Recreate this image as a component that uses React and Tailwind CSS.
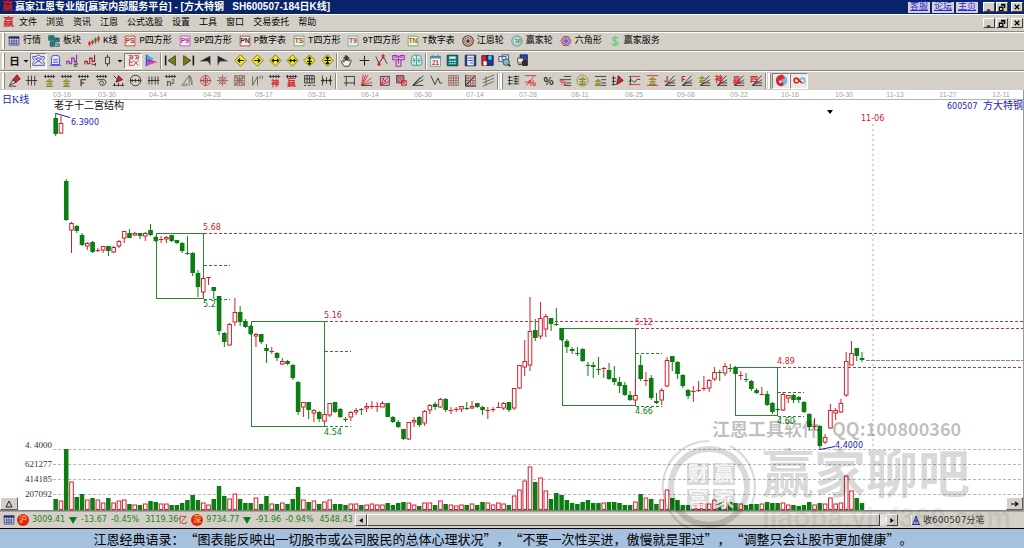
import clsx from 'clsx';

const MENU = ['文件', '浏览', '资讯', '江恩', '公式选股', '设置', '工具', '窗口', '交易委托', '帮助'];

// Trading-day axis, so the labels are not evenly spaced
const DATES = [
  ['03-16', 62], ['03-30', 107], ['04-14', 158], ['04-28', 212], ['05-17', 264], ['05-31', 317], ['06-14', 370],
  ['06-30', 423], ['07-14', 475], ['07-28', 528], ['08-11', 580], ['08-25', 634], ['09-08', 686], ['09-22', 739],
  ['10-16', 790], ['10-30', 844], ['11-13', 895], ['11-27', 948], ['12-11', 1001],
];

// [up, high, body top, body bottom, low, volume] in chart units
const CANDLES = [
  [0, 113, 118, 134, 136, 11], [1, 116, 123, 133, 134, 9], [0, 179, 181, 220, 221, 61], [1, 222, 223, 230, 253, 28],
  [0, 225, 226, 231, 233, 13], [0, 233, 235, 245, 246, 16], [1, 242, 243, 246, 250, 10], [0, 241, 242, 252, 253, 12],
  [1, 248, 250, 251, 252, 10], [1, 246, 246, 250, 253, 7], [0, 246, 246, 251, 256, 12], [1, 246, 247, 252, 253, 7],
  [1, 240, 241, 246, 248, 9], [1, 231, 231, 238, 243, 10], [0, 229, 233, 238, 238, 6], [1, 232, 233, 235, 236, 5],
  [0, 233, 233, 236, 239, 5], [1, 232, 233, 236, 241, 6], [0, 224, 230, 235, 236, 9], [0, 236, 237, 241, 242, 8],
  [1, 236, 239, 240, 243, 6], [1, 236, 237, 239, 243, 6], [0, 235, 235, 241, 242, 5], [0, 240, 240, 243, 244, 5],
  [0, 242, 243, 251, 253, 7], [0, 236, 253, 254, 255, 10], [0, 252, 253, 273, 276, 15], [0, 270, 273, 287, 297, 10],
  [1, 277, 278, 292, 297, 7], [1, 277, 277, 278, 285, 5], [0, 287, 287, 291, 299, 11], [0, 296, 296, 331, 335, 24],
  [0, 332, 333, 342, 347, 14], [1, 323, 324, 345, 346, 11], [1, 298, 312, 322, 326, 16], [0, 306, 312, 322, 326, 11],
  [0, 319, 321, 327, 328, 7], [0, 325, 326, 334, 335, 7], [1, 333, 334, 336, 347, 12], [0, 334, 334, 342, 344, 6],
  [0, 344, 348, 351, 363, 14], [1, 347, 351, 352, 354, 6], [0, 352, 353, 358, 361, 6], [1, 358, 361, 364, 365, 7],
  [0, 360, 361, 364, 365, 6], [0, 364, 365, 378, 380, 11], [0, 381, 382, 412, 415, 23], [1, 402, 402, 407, 417, 10],
  [0, 402, 402, 410, 419, 8], [1, 409, 410, 413, 422, 9], [0, 411, 412, 419, 422, 6], [1, 414, 414, 421, 424, 8],
  [1, 403, 403, 415, 417, 10], [0, 402, 402, 412, 413, 6], [0, 408, 409, 417, 418, 6], [0, 417, 419, 420, 422, 5],
  [1, 411, 412, 417, 421, 6], [1, 408, 410, 412, 415, 6], [0, 408, 409, 410, 415, 5], [1, 403, 406, 408, 412, 5],
  [1, 401, 406, 407, 409, 6], [1, 402, 406, 407, 412, 5], [1, 401, 403, 407, 407, 5], [0, 403, 403, 417, 417, 7],
  [0, 416, 417, 422, 423, 5], [0, 420, 422, 427, 428, 7], [0, 429, 429, 439, 440, 8], [1, 422, 422, 439, 440, 7],
  [1, 417, 420, 422, 427, 5], [0, 416, 417, 425, 427, 4], [1, 410, 411, 423, 426, 7], [1, 404, 405, 410, 414, 7],
  [0, 402, 404, 407, 410, 5], [1, 398, 399, 407, 408, 9], [0, 398, 399, 410, 412, 6], [1, 407, 410, 411, 414, 5],
  [1, 407, 409, 410, 412, 4], [1, 406, 406, 409, 412, 5], [0, 402, 408, 409, 410, 5], [1, 401, 406, 408, 409, 6],
  [0, 403, 403, 407, 408, 5], [0, 406, 407, 410, 415, 8], [1, 407, 410, 411, 419, 7], [1, 407, 409, 410, 412, 5],
  [1, 402, 407, 408, 408, 7], [1, 402, 403, 408, 410, 6], [0, 402, 402, 410, 412, 5], [1, 388, 388, 408, 410, 14],
  [1, 365, 365, 388, 389, 20], [1, 340, 361, 367, 376, 29], [1, 297, 331, 365, 371, 43], [0, 319, 330, 338, 341, 28],
  [1, 302, 318, 336, 339, 32], [1, 314, 316, 329, 337, 19], [0, 318, 318, 324, 331, 11], [0, 308, 324, 325, 326, 17],
  [0, 328, 328, 340, 341, 15], [0, 339, 341, 347, 353, 10], [0, 347, 349, 351, 354, 7], [0, 347, 353, 354, 356, 6],
  [0, 348, 349, 361, 362, 8], [0, 362, 365, 366, 376, 10], [0, 362, 365, 367, 378, 7], [0, 357, 369, 370, 375, 7],
  [1, 367, 368, 369, 378, 7], [0, 363, 370, 379, 380, 8], [0, 366, 378, 382, 385, 8], [0, 377, 382, 386, 393, 7],
  [0, 382, 385, 395, 396, 5], [0, 391, 395, 400, 401, 5], [1, 378, 395, 400, 405, 8], [0, 355, 365, 379, 381, 16],
  [1, 372, 380, 381, 386, 12], [0, 375, 378, 398, 400, 11], [0, 393, 401, 403, 404, 6], [1, 388, 390, 400, 405, 10],
  [1, 357, 360, 386, 387, 20], [0, 356, 356, 362, 371, 12], [0, 361, 362, 374, 379, 10], [0, 374, 375, 386, 388, 5],
  [0, 389, 390, 396, 399, 5], [1, 386, 391, 392, 402, 5], [1, 381, 390, 391, 392, 6], [1, 376, 388, 389, 391, 6],
  [1, 379, 380, 388, 392, 6], [1, 367, 372, 379, 381, 10], [0, 370, 372, 373, 381, 8], [1, 363, 366, 373, 376, 10],
  [0, 364, 368, 369, 372, 8], [0, 366, 367, 374, 375, 7], [1, 371, 375, 376, 380, 6], [0, 373, 379, 380, 382, 5],
  [0, 380, 381, 389, 391, 6], [0, 388, 390, 393, 394, 6], [1, 387, 394, 395, 395, 6], [0, 391, 394, 405, 406, 8],
  [0, 402, 403, 412, 414, 7], [0, 408, 409, 410, 411, 7], [1, 392, 394, 410, 411, 7], [1, 395, 395, 398, 403, 5],
  [0, 394, 395, 400, 403, 5], [0, 396, 397, 400, 403, 4], [0, 401, 402, 412, 413, 5], [0, 413, 414, 427, 430, 8],
  [1, 418, 426, 427, 430, 5], [0, 425, 426, 446, 450, 7], [1, 434, 437, 442, 444, 6], [1, 404, 410, 428, 429, 12],
  [1, 408, 410, 413, 420, 6], [1, 399, 403, 412, 413, 7], [1, 352, 361, 395, 397, 34], [1, 341, 353, 365, 365, 19],
  [0, 348, 348, 356, 361, 12], [0, 352, 358, 360, 362, 7],
];

const BOXES = [
  { x: 156, y: 233, w: 48, h: 65, hi: '5.68', lo: '5.2', mid: 265, base: 299 },
  { x: 251, y: 321, w: 74, h: 105, hi: '5.16', lo: '4.54', mid: 351, base: 426 },
  { x: 562, y: 328, w: 74, h: 77, hi: '5.12', lo: '4.66', mid: 353, base: 406 },
  { x: 735, y: 367, w: 43, h: 48, hi: '4.89', lo: '4.60', mid: 392, base: 416 },
];

const GREEN = '#0b7d12';
const RED = '#d3202f';

const K = '#222';
const R = '#d8202a';
const O = '#8f8a1e';
const CJK = '"Noto Sans CJK SC", sans-serif';

const glyph = (text, color, x = 8, y = 14, size = 10) => (
  <text x={x} y={y} fontSize={size} fontWeight="bold" fill={color} stroke="none" textAnchor="middle" fontFamily={CJK}>
    {text}
  </text>
);
const comb = <path d="M1 3h14M3 1v4M6.500 1v4M10 1v4M13 1v4" stroke={K} />;
const fan = <path d="M3 14h12M3 14L14 2M3 14L15 7M6 11h9" stroke={K} />;
const letterBox = (text, frame, color) => (
  <>
    <path d="M1.500 1.500h13v13h-13z" stroke={frame} fill="#f2efe8" />
    <text x="8" y="11" fontSize="9" fontWeight="bold" fill={color} stroke="none" textAnchor="middle" fontFamily="Liberation Sans, sans-serif">
      {text}
    </text>
  </>
);
const diamond = (arrow) => (
  <>
    <path d="M8 1l7 7-7 7-7-7z" fill="#f6ea1a" stroke="#6b6410" />
    <path d={arrow} stroke="#111" strokeWidth="1.400" />
  </>
);
const grid = <path d="M2 2h12v12H2zM5 2v12M8 2v12M11 2v12M2 5h12M2 8h12M2 11h12" stroke="#8b4a4a" strokeWidth="0.800" />;

const ICONS = {
  quote: (
    <>
      <path d="M1.500 2.500h13v11h-13z" fill="#e8ecff" stroke="#28306e" />
      <path d="M1 2h14v3H1z" fill="#28306e" stroke="none" />
      <path d="M2 8h12M2 11h12M5 5v8M8 5v8M11 5v8" stroke="#28306e" />
    </>
  ),
  blocks: (
    <>
      <path d="M1 1h7v6H1zM9 4h6v5H9zM3 9h6v6H3z" fill="#1f8f8a" stroke="#0c4d50" />
      <path d="M3 4h3M11 6h2M5 12h2M10 12h5v3h-5" stroke="#0c3038" />
    </>
  ),
  kline: (
    <>
      <path d="M2 8v7M6 6v7M14 1v9" stroke={R} />
      <path d="M1 10h2v3H1zM5 8h2v3H5zM13 3h2v4h-2z" fill={R} stroke={R} />
      <path d="M10 3v9M9 5h2v4H9z" fill="#1b8a2b" stroke="#1b8a2b" />
    </>
  ),
  ps: letterBox('PS', '#c22', '#a33'),
  p9: letterBox('P9', '#c02cc0', '#a12ca1'),
  pn: letterBox('PN', '#a22', '#333'),
  ts: letterBox('TS', '#2bb24c', '#c33'),
  t9: letterBox('T9', '#35b5ad', '#c33'),
  tn: letterBox('TN', '#5aa72c', '#962'),
  wheel: (
    <>
      <circle cx="8" cy="8" r="7" stroke="#7b2222" strokeWidth="1.400" />
      <circle cx="8" cy="8" r="4.500" stroke="#256b3a" />
      <circle cx="8" cy="8" r="2" stroke={R} fill="#333" />
    </>
  ),
  winwheel: (
    <>
      <circle cx="8" cy="8" r="7" stroke="#4b8c7c" />
      <circle cx="8" cy="8" r="5" stroke="#8ab5ad" fill="#dff0ea" />
      <path d="M5 6h3v5M5 9h3M10 5v6M12 5v5" stroke="#2c7c55" />
    </>
  ),
  hex: (
    <>
      <path d="M4.500 2h7L15 8l-3.500 6h-7L1 8z" stroke={R} />
      <circle cx="8" cy="8" r="4.500" stroke="#2730b8" />
      <circle cx="8" cy="8" r="2" stroke="#2730b8" fill="#7f7fe6" />
    </>
  ),
  dollar: <path d="M12 4.500C11 2.500 5 2.500 5 5.500S12 8 12 11s-7 3-8 .5M8.500 1v14" stroke="#6fcf7a" strokeWidth="2" />,
  day: glyph('日', '#111', 8, 13, 13),
  caret: <path d="M3 6h10l-5 5z" fill="#111" stroke="none" />,
  envelope: (
    <>
      <path d="M1 3h4l3-2 3 2h4v3l-2 2 2 3v3H1v-3l2-3-2-2z" stroke="#2f35d0" />
      <path d="M3 5l10 7M13 5L3 12M5 5h6" stroke="#2f35d0" />
    </>
  ),
  cylinder: (
    <path d="M3 4c0-3 10-3 10 0v9H3zM1 14h14M5 7h6M5 10h6" stroke="#2f35d0" fill="#e4e6fb" />
  ),
  wave1: (
    <>
      <path d="M1 13V9h3v3h3V5h3v4h3V1" stroke="#8a2ba0" strokeWidth="1.400" />
      <path d="M10 11h4v2h-4v2h4" stroke="#333" />
    </>
  ),
  wave2: (
    <>
      <path d="M1 13V9h3v3h3V5h3v4h3V1" stroke="#a8202c" strokeWidth="1.400" />
      <path d="M10 11v2h4v-2M14 11v4" stroke="#333" />
    </>
  ),
  candle: <path d="M8 1v3M8 12v3M5.500 4h5v8h-5z" stroke={K} />,
  knot: (
    <>
      <path d="M2 2h5v4H3v8h5M9 2h5v4h-4M8 8l6 6M14 8l-6 6" stroke={R} />
      <path d="M3 4h3M11 4h2M4 10h3" stroke={K} />
    </>
  ),
  flag: (
    <>
      <path d="M2 1v14" stroke="#2b4ce0" strokeWidth="2" />
      <path d="M3 1l8 5-8 3z" fill="#2dbdc9" stroke="none" />
      <path d="M3 6l13 4H3z" fill="#a52bc4" stroke="none" />
      <path d="M3 10h12L3 14z" fill="#e33ba2" stroke="none" />
    </>
  ),
  first: (
    <>
      <path d="M2 2v12" stroke="#1c1c1c" strokeWidth="2" />
      <path d="M14 2v12L5 8z" fill="#7a7a1a" stroke="#3b3b10" />
    </>
  ),
  last: (
    <>
      <path d="M14 2v12" stroke="#1c1c1c" strokeWidth="2" />
      <path d="M2 2v12l9-6z" fill="#7a7a1a" stroke="#3b3b10" />
    </>
  ),
  prev: <path d="M14 2v12l-3-5H1z" fill="#222" stroke="#888" strokeWidth="0.600" />,
  next: <path d="M2 2v12l3-5h10z" fill="#222" stroke="#888" strokeWidth="0.600" />,
  dLeft: diamond('M12 8H5M7.500 5.500L5 8l2.500 2.500'),
  dRight: diamond('M4 8h7M8.500 5.500L11 8l-2.500 2.500'),
  dBoth: diamond('M4 8h8M6 6L4 8l2 2M10 6l2 2-2 2'),
  dIn: diamond('M3 8h10M5 6l2 2-2 2M11 6L9 8l2 2'),
  dUp: diamond('M8 3v10M6 6l2-2 2 2M5 9h6M6 11l2 2 2-2'),
  dDown: diamond('M8 3v10M4 8h8M6 4l2 2 2-2M6 12l2-2 2 2'),
  hand: <path d="M5 15L1.500 9.500l1.500-1L5 10V4h1.500v4V2H8v6V3h1.500v5V4.500H11V9l2-2 1 1-3 7z" fill="#f3f1ea" stroke={K} />,
  cross: <path d="M8 2v12M2 8h12" stroke={K} strokeWidth="1.300" />,
  vwave: (
    <>
      <path d="M1 3l4 9 5-9 5 9" stroke={K} />
      <path d="M5 9v5M3 12l2 2 2-2M10 1v5M8 3l2-2 2 2" stroke={R} strokeWidth="1.400" />
    </>
  ),
  gate: (
    <path d="M1 2h5l2 2 2-2h5v5h-4v8H5V7H1zM5 7h6M8 4v8M3 4h3M10 4h3" stroke="#a22bb8" strokeWidth="1.300" />
  ),
  brain: (
    <path d="M8 2C5 0 1 3 2 7c-2 3 0 7 3 7h7c3 0 3-5 2-7 1-4-3-7-6-5zM8 2v12M5 5v6M11 5v6M3 8h4M9 8h4" stroke="#4aa89e" strokeWidth="1.300" fill="#d2ebe4" />
  ),
  calendar: (
    <>
      <path d="M2 4h12v11H2z" fill="#fff" stroke="#3a9a9a" />
      <path d="M2 3h12v2H2zM5 1v3M11 1v3" fill="#59b4b4" stroke="#3a7d8a" />
      <text x="8" y="13" fontSize="8" fontWeight="bold" fill={R} stroke="none" textAnchor="middle" fontFamily="Liberation Sans, sans-serif">21</text>
    </>
  ),
  calc: (
    <>
      <path d="M1.500 1.500h13v13h-13z" fill="#157878" stroke="#0b2f3f" />
      <path d="M4 3h8v3H4z" fill="#bff4ee" stroke="none" />
      <path d="M4 9h2M7 9h2M10 9h2M4 12h2M7 12h2M10 12h2" stroke="#d9ffff" strokeWidth="1.500" />
    </>
  ),
  note: (
    <>
      <path d="M1.500 1.500h13v13h-13z" fill="#243a86" stroke="#15204f" />
      <path d="M4 2h8v12H4z" fill="#e9ecf8" stroke="none" />
      <path d="M5 5h6M5 8h6M7 11h4" stroke="#243a86" />
    </>
  ),
  disk: (
    <>
      <path d="M1 2h9v12H1z" fill="#d02231" stroke="#5a1018" />
      <path d="M7 2h8v12H7z" fill="#22368e" stroke="#101c4e" />
      <path d="M9 2h4v5H9z" fill="#48d0d6" stroke="none" />
      <path d="M3 9h4v5H3z" fill="#fff" stroke="none" />
    </>
  ),
  search: (
    <>
      <path d="M1 3h9v6H1zM5 1h8v6H5z" fill="#e7ebf8" stroke="#28368e" />
      <circle cx="10" cy="10" r="4" fill="#7bbfae" stroke="#1d4f47" />
      <path d="M13 13l2 2" stroke="#111" strokeWidth="2" />
    </>
  ),
  monitor: (
    <>
      <path d="M5 1h9v7H5z" fill="#3241a6" stroke="#111c55" />
      <path d="M2 5h7v6H2z" fill="#ecebe0" stroke="#333" />
      <path d="M8 9h6v5H8zM3 13h4" fill="#333" stroke="#111" />
    </>
  ),
  pen: (
    <>
      <path d="M2 14l4-7 4 3z" fill="#f7d0d0" stroke={K} />
      <path d="M6 7l5-6 4 5-5 4z" fill={R} stroke="#5c1116" />
      <path d="M1 15h9" stroke={K} />
    </>
  ),
  ticks3: <path d="M1 8h14M4 2v12M8 2v12M12 2v12" stroke={K} />,
  gold: <>{comb}{glyph('金', O, 8, 15, 10)}</>,
  fcomb: <>{comb}<path d="M5 15V7h6M5 11h4" stroke={K} strokeWidth="1.300" /></>,
  spiral: <>{comb}<path d="M3 7h8c4 1 3 7-2 7-4 0-5-5-1-5 3 0 3 3 1 3" stroke={K} /></>,
  penLine: (
    <>
      <path d="M5 10l3-8 5 5z" fill={R} stroke="#5c1116" />
      <path d="M1 14h14M3 11v4M8 11v4M13 11v4M2 2l4 4" stroke={K} />
    </>
  ),
  circleBar: <><circle cx="8" cy="8" r="6.500" stroke={K} /><path d="M1 8h14M4 6v4M8 6v4M12 6v4" stroke={K} /></>,
  ticks4: <path d="M1 8h14M2.500 3v10M6 3v10M10 3v10M13.500 3v10" stroke={K} />,
  nsq: (
    <>
      {comb}
      <text x="8" y="15" fontSize="11" fill={K} stroke="none" textAnchor="middle" fontFamily="Liberation Sans, sans-serif">n²</text>
    </>
  ),
  sector: <path d="M1 14L10 2l4 12M1 14h6M4 11l5 3M11 2c3 3 3 8 2 11M10 2v12" stroke="#666" />,
  target: <><circle cx="8" cy="8" r="6" stroke={R} /><circle cx="8" cy="8" r="3" stroke={R} /><path d="M1 8h14M8 1v14" stroke="#844" /></>,
  star: <><circle cx="8" cy="8" r="4" stroke="#b84a4a" /><path d="M8 1v14M1 8h14M3 3l10 10M13 3L3 13" stroke="#966" /></>,
  gridStar: <>{grid}<path d="M2 2l12 12M14 2L2 14" stroke="#855" /></>,
  nQuote: <path d="M2 14V3M2 14L8 3v11M11 2v4M14 2v4" stroke="#555" />,
  shen: <>{comb}{glyph('神', R, 9, 15, 10)}</>,
  ying: <>{comb}{glyph('赢', R, 8, 15, 11)}</>,
  film: <path d="M2 2h12v9H2zM2 6h12M5 2v9M8 2v9M11 2v9M1 14h3M6 14h4M12 14h3" stroke={K} />,
  hbar: <path d="M3 2v12M13 2v12M8 4v8M1 8h14M5 6L3 8l2 2M11 6l2 2-2 2" stroke={K} />,
  rectTool: <path d="M4 3h10v8H4zM1 3h3M4 11v4M14 11v3M1 11h3" stroke={K} />,
  redFan: <><path d="M2 14L4 1M2 14L10 1M2 14l12-9M2 14l13-4M2 14L7 1" stroke={R} /><path d="M2 14h13" stroke={K} /></>,
  boxFan: <><path d="M3 3h11v11H3z" fill="#e7b5b9" stroke="#27307a" /><path d="M3 14L14 3M3 14L8 3M3 14l11-5M5 5l6 6" stroke={R} /></>,
  boxFan2: <><path d="M2 2h9v9H2z" fill="#b98aa0" stroke="#423048" /><path d="M2 2l12 12M6 2l8 8M2 6l8 8M8 8h6v6H8z" stroke={R} /></>,
  fan: <path d="M1 14h13M1 14L14 2M1 14l13-7M1 14L10 4" stroke={K} />,
  vline: <path d="M1 2l5 11 4-8 2 6h3" stroke={K} />,
  grid,
  gridAxis: <>{grid}<path d="M2 1v14h13M2 14L14 2" stroke={K} /></>,
  channel: <path d="M1 7l14-6M1 11l14-6M1 15l14-6M5 3v11" stroke="#555" />,
  ruler: <path d="M3 2v12M1 4h6M1 8h6M1 12h6M8 3h7M8 6h7M8 9h7M8 12h7M11 2v11" stroke={K} />,
  pct: <><path d="M1 2h14M3 14L12 3M1 10h5" stroke={R} />{glyph('%', R, 10, 15, 10)}</>,
  percent: glyph('%', K, 8, 13, 13),
  pctLines: <><path d="M6 3h9M1 7h14M9 11h6M6 14h9" stroke={K} />{glyph('%', R, 5, 13, 9)}</>,
  goldRing: <><circle cx="8" cy="8" r="6.800" stroke={O} />{glyph('金', O, 8, 12, 10)}</>,
  goldLines: <><path d="M1 3h14M9 7h6M9 11h6M1 14h14" stroke={K} />{glyph('金', O, 5, 13, 9)}</>,
  penTicks: <><path d="M3 2v12M1 5h5M1 9h5M1 13h5" stroke={K} /><path d="M7 13l2-11 6 6z" fill={R} stroke="#5c1116" /></>,
  waveBand: <><path d="M1 3h14M1 13h14" stroke={R} /><path d="M3 3v10M1 10c4-8 6 5 9-2 1-2 3-2 5-1" stroke={K} /></>,
  goldBand: <><path d="M1 2h14M1 14h14" stroke={R} />{glyph('金', O, 8, 12, 10)}</>,
  jFan: <>{fan}{glyph('J', R, 4, 10, 10)}</>,
  fFan: <>{fan}{glyph('F', R, 4, 10, 10)}</>,
  goldFan: <>{fan}{glyph('金', O, 5, 10, 9)}</>,
  shenFan: <>{fan}{glyph('神', R, 5, 10, 10)}</>,
  yingFan: <>{fan}{glyph('赢', R, 6, 11, 10)}</>,
  siFan: <>{fan}{glyph('四', R, 5, 10, 10)}</>,
  yinyang: (
    <>
      <circle cx="8" cy="8" r="7" fill="#7fb6dd" stroke="none" />
      <path d="M10 1C4 0 0 5 1.500 10S8 16 10 14c2-3-2-4-2-6s4-3 2-7z" fill="#dd2431" stroke="none" />
      <circle cx="6.500" cy="9.500" r="1.600" fill="#fff" stroke="none" />
      <circle cx="10.500" cy="5" r="1.400" fill="#dd2431" stroke="none" />
    </>
  ),
  infinity: (
    <>
      <path d="M8 8C5 3 1 5 1.500 8.500S6 12 8 8" stroke={R} strokeWidth="2" />
      <path d="M8 8c2-4 6-4 6.500 0S11 13 8 8" stroke="#77b4dc" strokeWidth="2" />
      <path d="M5 6l6 5" stroke={R} strokeWidth="2" />
    </>
  ),
};

const Icon = ({ name, className = 'size-[13px]' }) => (
  <svg viewBox="0 0 16 16" className={clsx('shrink-0 overflow-visible', className)} fill="none" aria-hidden="true">
    {ICONS[name]}
  </svg>
);

const ToolButton = ({ name, pressed }) => (
  <button
    type="button"
    aria-label={name}
    className={clsx(
      'flex h-4 items-center justify-center',
      pressed && 'border border-t-[#808080] border-l-[#808080] border-r-white border-b-white bg-[#ece9e3]'
    )}
  >
    <Icon name={name} />
  </button>
);

const Handle = () => <div className="mx-px h-4 w-[3px] border-r border-[#8c8880] bg-white" />;
const Separator = () => <div className="h-4 w-[2px] border-l border-[#8c8880] bg-white" />;

const Tools = ({ names, pressed = [], className }) => (
  <div className={clsx('grid auto-cols-fr grid-flow-col', className)}>
    {names.map((name, i) => (
      <ToolButton key={name + i} name={name} pressed={pressed.includes(name)} />
    ))}
  </div>
);

const QUICK = [
  ['quote', '行情'], ['blocks', '板块'], ['kline', 'K线'], ['ps', 'P四方形'], ['p9', '9P四方形'], ['pn', 'P数字表'],
  ['ts', 'T四方形'], ['t9', '9T四方形'], ['tn', 'T数字表'], ['wheel', '江恩轮'], ['winwheel', '赢家轮'],
  ['hex', '六角形'], ['dollar', '赢家服务'],
];

const WindowButtons = () => (
  <div className="flex items-center gap-px">
    {[
      ['最小化', 'M2 8h4'],
      ['还原', 'M3.500 1.500h4v4M3.500 2.500h4M1.500 4.500h4v4h-4zM1.500 5h4'],
      ['关闭', 'M2 2l5 5M7 2l-5 5'],
    ].map(([label, d], i) => (
      <button
        key={label}
        type="button"
        aria-label={label}
        className={clsx(
          'flex h-[10px] w-[12px] items-center justify-center border border-t-white border-l-white border-r-[#404040] border-b-[#404040] bg-[#d4d0c8]',
          i === 2 && 'ml-[2px]'
        )}
      >
        <svg viewBox="0 0 9 9" className="size-[8px]" fill="none" stroke="#000" strokeWidth="1.400">
          <path d={d} />
        </svg>
      </button>
    ))}
  </div>
);

const TitleBar = () => (
  <header className="flex h-[14px] items-center justify-between bg-[#0a246a] pr-px pl-[2px]">
    <div className="flex items-center gap-[2px]">
      <span className="text-[11px] leading-none font-bold text-[#d01c2c]">赢</span>
      <h1 className="font-['Liberation_Sans','Noto_Sans_CJK_SC',sans-serif] text-[10px] leading-none font-bold whitespace-pre text-white">
        赢家江恩专业版[赢家内部服务平台]{' - '}[方大特钢{'   '}SH600507-184日K线]
      </h1>
    </div>
    <div className="flex items-center gap-[5px]">
      <nav className="flex gap-[2px]">
        {['客服', '论坛', '主页'].map((t) => (
          <a key={t} href="#" className="flex h-[11px] w-[22px] items-center justify-center bg-[#d4d0dc] text-[9px] leading-none text-[#2a2ad0] underline">
            {t}
          </a>
        ))}
      </nav>
      <WindowButtons />
    </div>
  </header>
);

const Chart = () => {
  const cx = (i) => 55.7 + i * 5.27;
  const num = 'DejaVu Sans, sans-serif';

  return (
    <svg viewBox="0 90 1024 421" className="block h-auto w-full bg-white" fontFamily={num} fontSize="8">
      {/* Date axis */}
      <line x1="53" x2="1024" y1="99.500" y2="99.500" stroke="#b4b4b4" />
      {DATES.map(([d, x]) => (
        <text key={d} x={x} y="97" textAnchor="middle" fill="#a3a3a3" fontSize="7" fontFamily="Liberation Sans Narrow, Liberation Sans, sans-serif">
          {d}
        </text>
      ))}
      <text x="2" y="103" fontSize="10" fill="#1c1cb4" fontFamily={`Liberation Serif, ${CJK}`}>日K线</text>
      <text x="54" y="109" fontSize="10" fill="#111" fontFamily={CJK}>老子十二宫结构</text>
      <text x="947" y="109" fill="#1c1cb4">600507</text>
      <text x="1023" y="109" fontSize="10" fill="#1c1cb4" textAnchor="end" fontFamily={CJK}>方大特钢</text>

      {/* Price and volume grid */}
      {[
        [449, '4. 4000'],
        [464, '621277'],
        [479, '414185'],
        [494, '207092'],
      ].map(([y, label]) => (
        <g key={y}>
          <line x1="53" x2="1023" y1={y + 0.5} y2={y + 0.5} stroke="#b9b9b9" strokeDasharray="3 2" />
          <text x="52" y={y - 1 + (y > 449 ? 4 : 0)} textAnchor="end" fontSize="9" fill="#333" fontFamily="Liberation Serif, serif">
            {label}
          </text>
        </g>
      ))}
      <line x1="873" x2="873" y1="124" y2="450" stroke="#8fb4d0" strokeDasharray="2 3" />

      {/* Box levels */}
      {BOXES.map((b) => (
        <g key={b.hi}>
          <line x1={b.x + b.w} x2="1023" y1={b.y + 0.5} y2={b.y + 0.5} stroke="#d42a40" strokeDasharray="3 2" />
          <rect x={b.x + 0.5} y={b.y + 0.5} width={b.w - 1} height={b.h} fill="none" stroke="#2a862f" />
          <path d={`M${b.x + b.w} ${b.mid + 0.5}h26M${b.x + b.w} ${b.base + 0.5}h26`} stroke="#2a862f" strokeDasharray="3 2" />
          <text x={b.x + b.w - 1} y={b.y - 3} fill={RED}>{b.hi}</text>
          <text x={b.x + b.w - 1} y={b.y + b.h + 9} fill={GREEN}>{b.lo}</text>
        </g>
      ))}
      <line x1="866" x2="1023" y1="360.500" y2="360.500" stroke="#8a8a8a" strokeDasharray="4 1" />

      {/* Candles */}
      {CANDLES.map(([up, high, top, bottom, low, vol], i) => {
        const x = cx(i);
        const color = up ? RED : GREEN;
        const hollow = up && bottom - top > 1;
        return (
          <g key={i} stroke={color}>
            <line x1={x} x2={x} y1={high} y2={low} />
            {hollow ? (
              <rect x={x - 1.8} y={top + 0.5} width="3.600" height={bottom - top - 0.5} fill="#fff" />
            ) : (
              <rect x={x - 2.3} y={top} width="4.600" height={bottom - top} fill={color} stroke="none" />
            )}
            {up ? (
              <rect x={x - 1.8} y={510 - vol} width="3.600" height={vol - 0.5} fill="#fff" />
            ) : (
              <rect x={x - 2.3} y={510 - vol} width="4.500" height={vol} fill={color} stroke="none" />
            )}
          </g>
        );
      })}

      {/* High and low callouts */}
      <path d="M56 113.500l14 4M820 449.500l15-3" stroke="#1c1cb4" />
      <text x="71" y="125" fill="#1c1cb4">6.3900</text>
      <text x="835" y="448" fill="#1c1cb4">4.4000</text>
      <path d="M827 110h6l-3 4z" fill="#000" />
      <text x="861" y="121" fill={RED}>11-06</text>

      <line x1="0" x2="1024" y1="510.500" y2="510.500" stroke="#808080" />
      <line x1="1023.500" x2="1023.500" y1="90" y2="511" stroke="#9a9a9a" />
    </svg>
  );
};

const Watermark = () => (
  <svg viewBox="660 410 364 118" className="pointer-events-none absolute right-0 bottom-0 h-[118px] w-[364px]" fontFamily={CJK} fontWeight="bold" aria-hidden="true">
    <g fill="#000" fillOpacity="0.260" fontSize="18">
      <text x="712" y="436">江恩工具软件</text>
      <text x="832" y="436">QQ:100800360</text>
    </g>
    <g fill="#000" fillOpacity="0.150">
      <text x="762" y="493" fontSize="52">赢家聊吧</text>
      <text x="762" y="527" fontSize="28" fontFamily="Liberation Sans, sans-serif" fillOpacity="0.080">jiaoba.yjcf360.com</text>
      <path d="M687 463h22v22h-22zM713 463h22v22h-22zM687 489h22v22h-22zM713 489h22v22h-22z" />
    </g>
    <g fill="none" stroke="#000" strokeOpacity="0.150">
      <circle cx="709" cy="487" r="38" strokeWidth="6" />
      <path d="M690 529A46 46 0 0 1 709 441M730 446A46 46 0 0 1 748 511" strokeWidth="2" />
    </g>
    <g fill="#fff" fillOpacity="0.800" fontSize="20" textAnchor="middle">
      <text x="698" y="481">财</text>
      <text x="724" y="481">赢</text>
      <text x="698" y="507">富</text>
      <text x="724" y="507">家</text>
    </g>
  </svg>
);

const Index = ({ badge, value, change, percent, amount, unit }) => (
  <div className="flex items-center">
    <span className="mr-[3px] flex size-3 items-center justify-center rounded-full bg-[#e02418] text-[8px] leading-none text-[#ffe14a]">{badge}</span>
    <span>{value}</span>
    <svg viewBox="0 0 8 7" className="mx-1 h-[7px] w-2"><path d="M0 0h8L4 7z" fill={GREEN} /></svg>
    <span>{change}</span>
    <span className="ml-1">{percent}</span>
    <span className="ml-[6px]">{amount}</span>
    {unit && <span className="text-[9px] text-[#c02020]">{unit}</span>}
  </div>
);

const StatusBar = () => (
  <footer className="flex h-[17px] items-center border-t border-[#a8a49c] bg-[#d4d0c8] pl-[3px] font-['DejaVu_Sans','Noto_Sans_CJK_SC',sans-serif] text-[8px] leading-none text-[#1b8222]">
    <Icon name="quote" className="mr-[2px] size-3" />
    <div className="flex gap-1">
      <Index badge="沪" value="3009.41" change="-13.67" percent="-0.45%" amount="3119.36" unit="亿" />
      <Index badge="深" value="9734.77" change="-91.96" percent="-0.94%" amount="4548.43" />
    </div>
    <div className="ml-[2px] flex h-[12px] flex-1 items-stretch bg-[#e9e6e0]">
      <button type="button" aria-label="向左" className="flex w-3 items-center justify-center border border-t-white border-l-white border-r-[#404040] border-b-[#404040] bg-[#d4d0c8]">
        <svg viewBox="0 0 4 6" className="h-[5px] w-[4px]"><path d="M4 0v6L0 3z" /></svg>
      </button>
      <div className="flex-1 border border-t-white border-l-white border-r-[#404040] border-b-[#404040] bg-[#d4d0c8]" />
      <button type="button" aria-label="向右" className="ml-[6px] flex w-3 items-center justify-center border border-t-white border-l-white border-r-[#404040] border-b-[#404040] bg-[#d4d0c8]">
        <svg viewBox="0 0 4 6" className="h-[5px] w-[4px]"><path d="M0 0v6l4-3z" /></svg>
      </button>
    </div>
    <div className="ml-[13px] flex w-[113px] items-center gap-[3px] border-l border-white text-[#333]">
      <svg viewBox="0 0 8 10" className="h-[10px] w-2" fill="none" stroke="#2a35b0"><path d="M1 9L4 1l3 8M2 6h4M0 9.500h8M4 1v8" /></svg>
      <span className="text-[9px]">收600507分笔</span>
    </div>
  </footer>
);

export default function App() {
  return (
    <div className="bg-[#d4d0c8] font-['Liberation_Mono','Noto_Sans_CJK_SC',monospace] text-black">
      <TitleBar />

      {/* Menu */}
      <div className="flex h-[17px] items-center justify-between border-t border-white pr-px pl-[3px]">
        <div className="flex items-center">
          <span className="mr-[5px] text-[11px] leading-none font-bold text-[#d01c2c]">赢</span>
          <nav className="flex gap-[9px] text-[9px] leading-none">
            {MENU.map((m) => (
              <button key={m} type="button">{m}</button>
            ))}
          </nav>
        </div>
        <WindowButtons />
      </div>

      {/* Quick access */}
      <div className="flex h-[19px] items-center border-t border-[#8c8880] pl-px shadow-[inset_0_1px_0_#fff]">
        <Handle />
        <div className="ml-[2px] flex gap-[7px] text-[9px] leading-none">
          {QUICK.map(([icon, label]) => (
            <button key={label} type="button" className="flex items-center gap-[3px]">
              <Icon name={icon} className="size-3" />
              {label}
            </button>
          ))}
        </div>
      </div>

      {/* Period and navigation */}
      <div className="flex h-5 items-center border-t border-[#8c8880] pl-px shadow-[inset_0_1px_0_#fff]">
        <Handle />
        <Tools names={['day']} className="w-4" />
        <Icon name="caret" className="w-2" />
        <Tools names={['envelope', 'cylinder', 'wave1', 'wave2', 'candle']} pressed={['envelope']} className="w-[86px]" />
        <Icon name="caret" className="w-2" />
        <Tools names={['knot', 'flag']} pressed={['knot']} className="w-9" />
        <Separator />
        <Tools names={['first', 'last', 'prev', 'next', 'dLeft', 'dRight', 'dBoth', 'dIn', 'dUp', 'dDown']} className="w-[174px]" />
        <Separator />
        <Tools names={['hand', 'cross', 'vwave', 'gate', 'brain']} className="w-[87px]" />
        <Separator />
        <Tools names={['calendar', 'calc', 'note', 'disk', 'search', 'monitor']} className="w-[104px]" />
      </div>

      {/* Drawing tools */}
      <div className="flex h-5 items-center border-t border-[#8c8880] pl-px shadow-[inset_0_1px_0_#fff]">
        <Handle />
        <Tools
          names={[
            'pen', 'ticks3', 'gold', 'gold', 'fcomb', 'spiral', 'penLine', 'circleBar', 'ticks4', 'nsq', 'sector',
            'target', 'star', 'gridStar', 'nQuote', 'shen', 'ying', 'film', 'hbar',
          ]}
          className="w-[329px]"
        />
        <Separator />
        <Tools names={['rectTool', 'redFan', 'boxFan', 'boxFan2', 'fan', 'vline', 'grid', 'gridAxis', 'channel']} className="ml-1 w-[156px]" />
        <Separator />
        <Handle />
        <Tools
          names={[
            'ruler', 'pct', 'percent', 'pctLines', 'goldRing', 'goldLines', 'penTicks', 'waveBand', 'goldBand',
            'jFan', 'fFan', 'goldFan', 'shenFan', 'yingFan', 'siFan',
          ]}
          className="ml-px w-[260px]"
        />
        <Separator />
        <Handle />
        <Tools names={['yinyang', 'infinity']} pressed={['yinyang', 'infinity']} className="w-9" />
      </div>

      <div className="relative">
        <div className="relative">
          <Chart />
          <button type="button" className="absolute bottom-px left-0 flex h-[13px] w-[18px] items-center justify-center border border-t-white border-l-white border-r-[#606060] border-b-[#606060] bg-[#d4d0c8]" aria-label="展开">
            <svg viewBox="0 0 8 8" className="size-2" fill="none" stroke="#222"><path d="M4 1l3 6H1z" /></svg>
          </button>
          <button type="button" className="absolute right-px bottom-px flex h-[13px] w-[17px] items-center justify-center border border-t-white border-l-white border-r-[#606060] border-b-[#606060] bg-[#d4d0c8]" aria-label="前进">
            <svg viewBox="0 0 8 8" className="size-2" fill="none" stroke="#000" strokeWidth="1.200"><path d="M0 4h7M4 2l3 2-3 2" /></svg>
          </button>
        </div>
        <StatusBar />
        <Watermark />
      </div>

      {/* Ticker */}
      <p
        lang="zh-CN"
        className="flex h-5 items-center justify-center border-t border-black bg-[#a6c1de] pr-[18px] font-['Noto_Sans_CJK_SC',sans-serif] text-[13px] leading-none whitespace-nowrap [text-spacing-trim:space-all]"
      >
        江恩经典语录：“图表能反映出一切股市或公司股民的总体心理状况”，“不要一次性买进，傲慢就是罪过”，“调整只会让股市更加健康”。
      </p>
    </div>
  );
}
